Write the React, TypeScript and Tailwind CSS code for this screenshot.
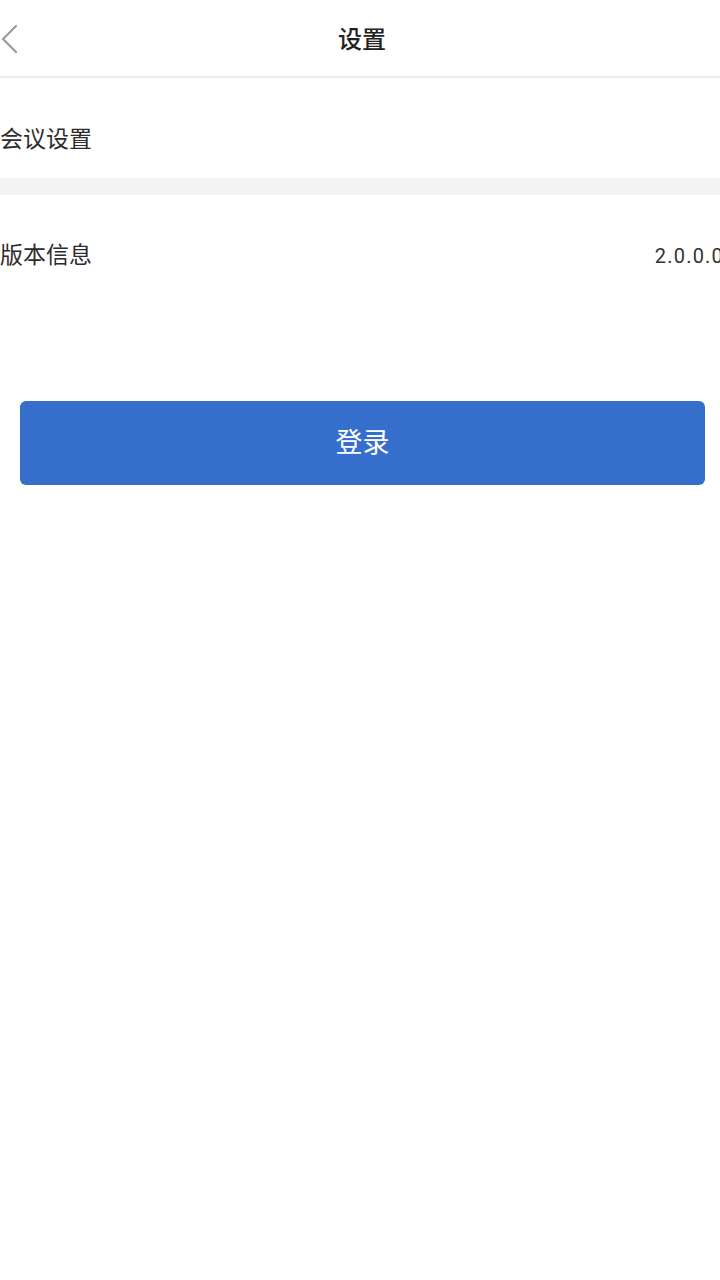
export default function App() {
  return (
    <div className="min-h-[1280px] w-[720px] overflow-hidden bg-white font-['Roboto','Noto_Sans_CJK_SC',sans-serif] text-[#333]">
      {/* top bar */}
      <div className="relative flex h-[78px] items-center justify-center border-b-2 border-[#ededed]">
        <svg className="absolute left-0 top-[24px]" width="20" height="30" viewBox="0 0 20 30" fill="none">
          <path d="M16 2 L3 15 L16 28" stroke="#9b9b9b" strokeWidth="2.2" strokeLinecap="round" strokeLinejoin="round" />
        </svg>
        <span className="pl-[4px] pt-[4px] text-[24px] font-medium text-[#222]">设置</span>
      </div>

      <div className="flex h-[100px] items-center pt-[24px]">
        <span className="text-[23px] text-[#2c2c2c]">会议设置</span>
      </div>

      <div className="h-[17px] bg-[#f4f4f4]" />

      <div className="flex h-[118px] items-center justify-between pt-[4px]">
        <span className="text-[23px] text-[#2c2c2c]">版本信息</span>
        <span className="-mr-[4px] text-[20px] tracking-[1.2px] text-[#333]">2.0.0.0</span>
      </div>

      <div className="mt-[88px] px-[20px] pr-[15px]">
        <button className="flex h-[84px] w-full items-center justify-center rounded-[6px] bg-[#356ecb] text-[27px] text-white">
          登录
        </button>
      </div>
    </div>
  );
}
